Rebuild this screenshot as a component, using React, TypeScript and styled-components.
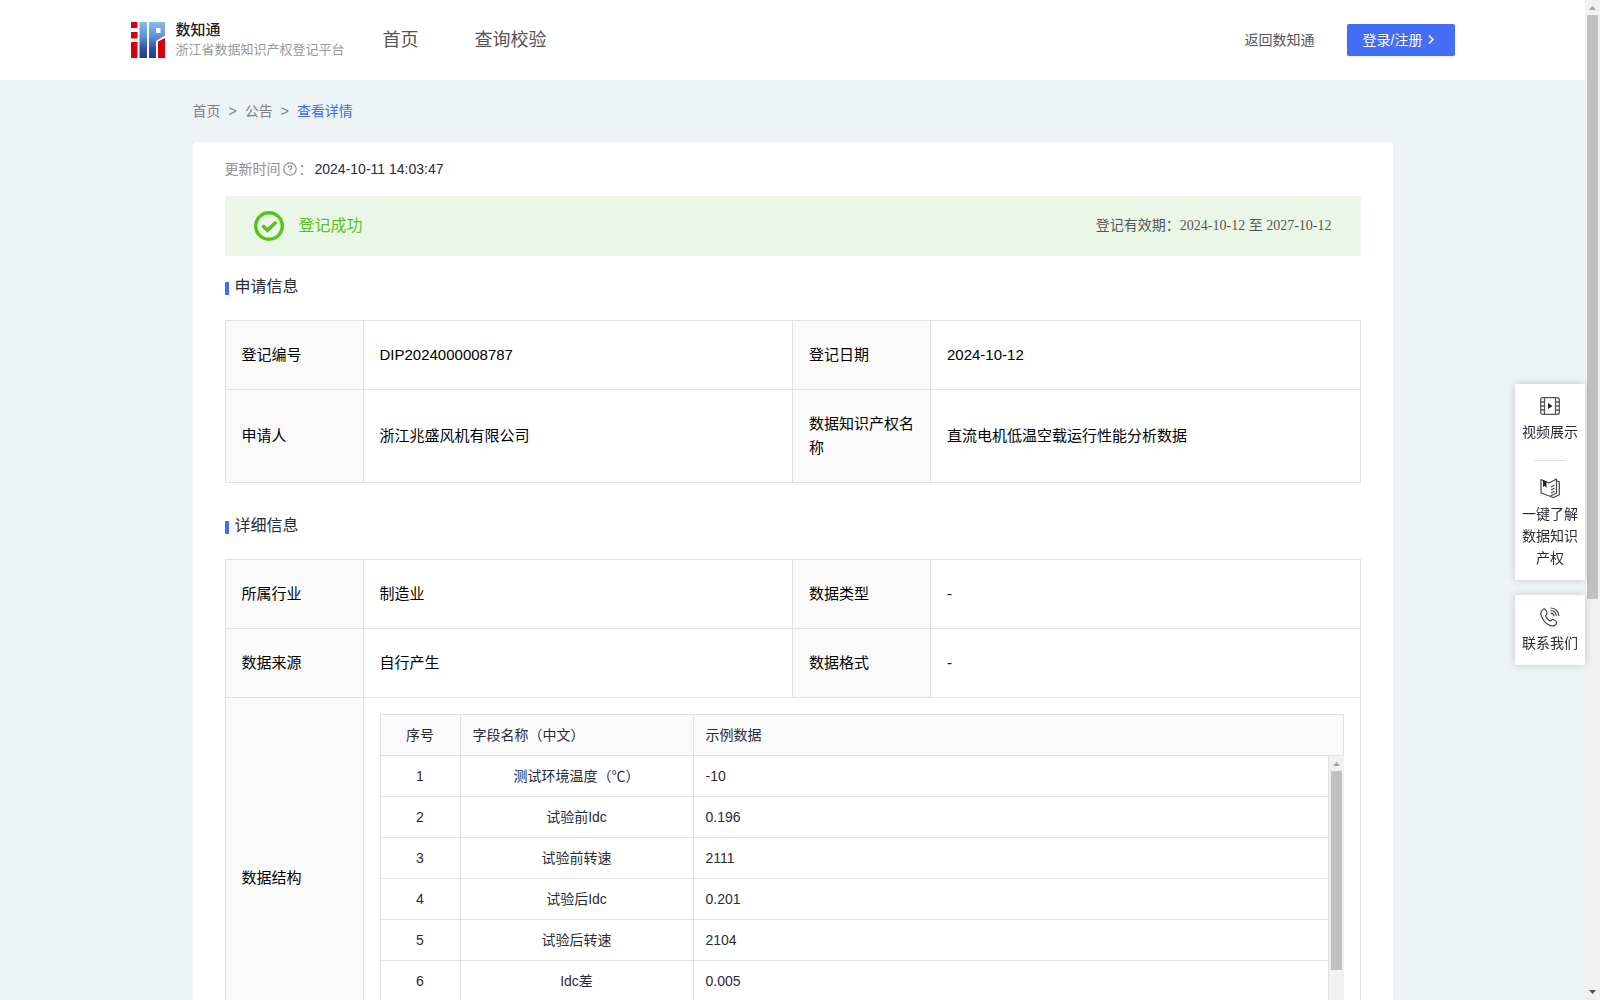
import React from "react";
import styled, { createGlobalStyle } from "styled-components";

const SANS = '"Liberation Sans", "Noto Sans CJK SC", sans-serif';
const SERIF = '"Liberation Serif", "Noto Sans CJK SC", serif';
const LINE = "#e1e1e1";
const BLUE = "#446ef5";
const INK = "#292b38";

const GlobalStyle = createGlobalStyle`
  *, *::before, *::after { box-sizing: border-box; }
  body { margin: 0; font-family: ${SANS}; font-size: 14px; line-height: 22px; color: ${INK}; background: #eef3f6; }
  a { color: inherit; text-decoration: none; }
`;

const Shell = styled.div`
  display: flex;
  height: 100vh;
`;

const Viewport = styled.div`
  flex: 1;
  min-width: 0;
  overflow-y: auto;
  scrollbar-width: none;
`;

/* Scrollbars */
const Track = styled.div`
  flex: none;
  display: flex;
  flex-direction: column;
  width: 15px;
  background: #f1f1f1;
`;

const Arrow = styled.svg`
  flex: none;
  display: block;
  width: 15px;
  height: 15px;
`;

const Groove = styled.div`
  flex: 1;
  min-height: 0;
  padding: 0 2px;
`;

const Thumb = styled.div<{ $share: string }>`
  height: ${(p) => p.$share};
  background: #c1c1c1;
`;

function Scrollbar({ share }: { share: string }) {
  return (
    <Track aria-hidden="true">
      <Arrow viewBox="0 0 15 15">
        <path d="M4 10h7L7.500 6z" fill="#a3a3a3" />
      </Arrow>
      <Groove>
        <Thumb $share={share} />
      </Groove>
      <Arrow viewBox="0 0 15 15">
        <path d="M4 5h7L7.500 9z" fill="#505050" />
      </Arrow>
    </Track>
  );
}

/* Header */
const Header = styled.header`
  background: #fff;
`;

const HeaderInner = styled.div`
  display: flex;
  align-items: center;
  max-width: 1324px;
  height: 80px;
  margin: 0 auto;
`;

const Brand = styled.a`
  display: flex;
  align-items: center;
  gap: 11px;
`;

const BrandText = styled.div`
  display: flex;
  flex-direction: column;
`;

const BrandName = styled.strong`
  font-size: 15px;
  line-height: 20px;
  font-weight: 500;
  color: #222;
`;

const BrandSub = styled.span`
  font-size: 13px;
  line-height: 20px;
  color: #999;
`;

const Nav = styled.nav`
  display: flex;
  gap: 56px;
  margin-left: 38px;
  font-size: 18px;
  line-height: 28px;
  color: #555;
`;

const HeaderActions = styled.div`
  display: flex;
  align-items: center;
  gap: 32px;
  margin-left: auto;
  color: #555;
`;

const LoginButton = styled.button`
  display: flex;
  align-items: center;
  gap: 2px;
  height: 32px;
  padding: 0 16px;
  border: 0;
  border-radius: 2px;
  background: ${BLUE};
  color: #fff;
  font: inherit;
  text-shadow: 0 -1px 0 rgba(0, 0, 0, 0.12);
  box-shadow: 0 2px 0 rgba(0, 0, 0, 0.05);
`;

/* Page body */
const Main = styled.main`
  max-width: 1200px;
  margin: 0 auto;
  padding: 20px 0 40px;
`;

const Crumbs = styled.nav`
  display: flex;
  gap: 8px;
  margin-bottom: 20px;
  color: #808080;
`;

const CrumbCurrent = styled.a`
  color: #3b6cf6;
`;

const Card = styled.section`
  padding: 16px 32px 32px;
  border-radius: 4px;
  background: #fff;
`;

const Updated = styled.div`
  display: flex;
  align-items: center;
  margin-bottom: 16px;
  color: ${INK};
`;

const UpdatedLabel = styled.span`
  display: flex;
  align-items: center;
  gap: 2px;
  width: 90px;
  color: #8f8f94;
`;

const Status = styled.div`
  display: flex;
  align-items: center;
  height: 60px;
  padding: 0 29px;
  background: #ebf7e6;
`;

const StatusText = styled.span`
  margin-left: 15px;
  font-size: 16px;
  line-height: 24px;
  color: #52c41a;
`;

const Validity = styled.span`
  margin-left: auto;
  font-family: ${SERIF};
  color: #555;
`;

const Section = styled.section<{ $gap: number }>`
  margin-top: ${(p) => p.$gap}px;
`;

const SectionTitle = styled.h2`
  display: flex;
  align-items: center;
  gap: 6px;
  margin: 0 0 21px;
  font-size: 16px;
  line-height: 24px;
  font-weight: 400;

  &::before {
    content: "";
    width: 4px;
    height: 13px;
    margin-top: 3px;
    background: ${BLUE};
  }
`;

const InfoTable = styled.table`
  width: 100%;
  table-layout: fixed;
  border-collapse: collapse;
  font-size: 15px;
  line-height: 24px;
  color: #000;
`;

const LabelCol = styled.col`
  width: 138px;
`;

const InfoLabel = styled.th`
  padding: 22px 12px 22px 16px;
  border: 1px solid ${LINE};
  background: #fafafa;
  font-weight: 400;
  text-align: left;
`;

const InfoValue = styled.td`
  padding: 22px 16px;
  border: 1px solid ${LINE};
`;

const NestedCell = styled.td`
  padding: 16px;
  border: 1px solid ${LINE};
`;

/* Field table */
const FieldTable = styled.table`
  width: 100%;
  table-layout: fixed;
  border-collapse: separate;
  border-spacing: 0;
  font-size: 14px;
  line-height: 22px;
  color: ${INK};
`;

const FieldCol = styled.col<{ $width?: number }>`
  width: ${(p) => (p.$width ? `${p.$width}px` : "auto")};
`;

const FieldHead = styled.th<{ $center?: boolean }>`
  height: 41px;
  padding: 9px 12px;
  border-right: 1px solid ${LINE};
  border-bottom: 1px solid ${LINE};
  background: #fafafa;
  font-weight: 400;
  text-align: ${(p) => (p.$center ? "center" : "left")};
`;

const FieldCell = styled.td<{ $center?: boolean }>`
  padding: 9px 12px;
  border-right: 1px solid ${LINE};
  border-bottom: 1px solid ${LINE};
  text-align: ${(p) => (p.$center ? "center" : "left")};
`;

const FieldFrame = styled.div`
  border-top: 1px solid ${LINE};
  border-left: 1px solid ${LINE};
`;

const FieldScroll = styled.div`
  display: flex;
  height: 285px;
`;

const FieldBody = styled.div`
  flex: 1;
  overflow-y: auto;
  scrollbar-width: none;
`;

/* Floating side tools */
const SideTools = styled.aside`
  position: fixed;
  top: 384px;
  right: 15px;
  display: flex;
  flex-direction: column;
  gap: 15px;
  width: 70px;
`;

const SidePanel = styled.div`
  padding: 12px 7px 11px;
  background: #fff;
  box-shadow: 0 0 8px rgba(0, 0, 0, 0.18);
`;

const SideItem = styled.a`
  display: flex;
  flex-direction: column;
  align-items: center;
  gap: 5px;
  text-align: center;
`;

const SideDivider = styled.hr`
  width: 32px;
  height: 1px;
  margin: 17px auto;
  border: 0;
  background: #ddd;
`;

const Logo = () => (
  <svg width="34" height="36" viewBox="0 0 34 36" aria-hidden="true">
    <defs>
      <linearGradient id="logoBlue" x1="0" y1="0" x2="0" y2="36" gradientUnits="userSpaceOnUse">
        <stop offset="0" stopColor="#8abbea" />
        <stop offset="0.4" stopColor="#5f92d6" />
        <stop offset="0.75" stopColor="#2f4fa0" />
        <stop offset="1" stopColor="#253c8c" />
      </linearGradient>
    </defs>
    <path d="M0 0h6.500v6H0zM0 10h6.500v6.500H0zM0 20h6.500v16H0z" fill="#d4000a" />
    <path d="M8.500 0H16v36H8.500z" fill="url(#logoBlue)" />
    <path d="M18 0h16v13.500L25 19v17h-7zM25 6v5h4.500V6z" fill="url(#logoBlue)" fillRule="evenodd" />
    <path d="M27 19.500l7-3.500v20h-7z" fill="#d4000a" />
  </svg>
);

const Chevron = () => (
  <svg width="14" height="14" viewBox="0 0 14 14" aria-hidden="true">
    <path d="M4 2.500l4 4-4 4" fill="none" stroke="#fff" strokeWidth="1.600" />
  </svg>
);

const Question = () => (
  <svg width="14" height="14" viewBox="0 0 14 14" fill="none" stroke="#8f8f94" strokeWidth="1.200" aria-hidden="true">
    <circle cx="7" cy="7" r="6.200" />
    <path d="M5.200 5.700a1.800 1.700 0 1 1 2.700 1.400c-.6.350-.9.600-.9 1.300M7 9.400v1.200" />
  </svg>
);

const Check = () => (
  <svg width="30" height="30" viewBox="0 0 30 30" fill="none" stroke="#52c41a" aria-hidden="true">
    <circle cx="15" cy="15" r="13.300" strokeWidth="3.400" />
    <path d="M8.500 14.500l5 4.700 8.700-8.200" strokeWidth="3.600" />
  </svg>
);

const VideoIcon = () => (
  <svg width="20" height="20" viewBox="0 0 20 20" fill="none" stroke="#55565e" strokeWidth="1.300" aria-hidden="true">
    <rect x="0.700" y="1.700" width="18.600" height="16.600" rx="2" />
    <path d="M4.500 2v16M15.500 2v16M1 6h3.500M1 10h3.500M1 14h3.500M15.500 6H19M15.500 10H19M15.500 14H19" />
    <path d="M8 7v6l4.500-3z" fill="#22242c" stroke="none" />
  </svg>
);

const BookIcon = () => (
  <svg width="20" height="20" viewBox="0 0 20 20" fill="none" stroke="#44464f" strokeWidth="1.200" strokeLinejoin="round" aria-hidden="true">
    <path d="M1 1.500L9 5l7.500-4v14L10 18.300 1 15z" />
    <path d="M17 3l2.300.8v13L13.500 19.500l-3.500-1M11 9l3.500-1.800M11 12l3.500-1.800M11 15l3.500-1.800" />
    <path d="M3 2v7l1.500-1.200L6.500 10V3.500z" fill="#22242c" stroke="none" />
  </svg>
);

const PhoneIcon = () => (
  <svg width="20" height="20" viewBox="0 0 20 20" fill="none" stroke="#44464f" strokeWidth="1.200" strokeLinecap="round" strokeLinejoin="round" aria-hidden="true">
    <path d="M3.200 2.300C.3 4 .2 7.500 2.500 11.500c2.500 4.500 6.500 7.300 10 7.400 2.300 0 4-1.500 4.200-3.500 0-.8-3-3-4-2.900-1 .1-1.500 1.500-2.500 1.400-1.400-.2-4.300-3.600-4.500-5C5.500 8 7 7.500 7.100 6.500 7.200 5.500 5.200 1.800 4.500 1.800c-.5 0-.9.200-1.300.5z" />
    <path d="M11 1c4.300.2 7.500 3.300 7.800 7.500M11 3.500c2.900.2 5 2.200 5.200 5M11 6.200c1.600.1 2.600 1 2.700 2.500" />
  </svg>
);

type Pair = [string, string, string, string];

const applicationRows: Pair[] = [
  ["登记编号", "DIP2024000008787", "登记日期", "2024-10-12"],
  ["申请人", "浙江兆盛风机有限公司", "数据知识产权名称", "直流电机低温空载运行性能分析数据"],
];

const detailRows: Pair[] = [
  ["所属行业", "制造业", "数据类型", "-"],
  ["数据来源", "自行产生", "数据格式", "-"],
];

const fields = [
  ["测试环境温度（℃）", "-10"],
  ["试验前Idc", "0.196"],
  ["试验前转速", "2111"],
  ["试验后Idc", "0.201"],
  ["试验后转速", "2104"],
  ["Idc差", "0.005"],
];

function InfoColumns() {
  return (
    <colgroup>
      <LabelCol />
      <col />
      <LabelCol />
      <col />
    </colgroup>
  );
}

function InfoRow({ cells }: { cells: Pair }) {
  return (
    <tr>
      <InfoLabel scope="row">{cells[0]}</InfoLabel>
      <InfoValue>{cells[1]}</InfoValue>
      <InfoLabel scope="row">{cells[2]}</InfoLabel>
      <InfoValue>{cells[3]}</InfoValue>
    </tr>
  );
}

function FieldColumns() {
  return (
    <colgroup>
      <FieldCol $width={80} />
      <FieldCol $width={233} />
      <FieldCol />
    </colgroup>
  );
}

function Fields() {
  return (
    <FieldFrame>
      <FieldTable>
        <FieldColumns />
        <thead>
          <tr>
            <FieldHead $center>序号</FieldHead>
            <FieldHead>字段名称（中文）</FieldHead>
            <FieldHead>示例数据</FieldHead>
          </tr>
        </thead>
      </FieldTable>
      <FieldScroll>
        <FieldBody>
          <FieldTable>
            <FieldColumns />
            <tbody>
              {fields.map(([name, sample], i) => (
                <tr key={name}>
                  <FieldCell $center>{i + 1}</FieldCell>
                  <FieldCell $center>{name}</FieldCell>
                  <FieldCell>{sample}</FieldCell>
                </tr>
              ))}
            </tbody>
          </FieldTable>
        </FieldBody>
        <Scrollbar share="78%" />
      </FieldScroll>
    </FieldFrame>
  );
}

export default function App() {
  return (
    <>
      <GlobalStyle />
      <Shell>
        <Viewport>
          <Header>
            <HeaderInner>
              <Brand href="#">
                <Logo />
                <BrandText>
                  <BrandName>数知通</BrandName>
                  <BrandSub>浙江省数据知识产权登记平台</BrandSub>
                </BrandText>
              </Brand>
              <Nav>
                <a href="#">首页</a>
                <a href="#">查询校验</a>
              </Nav>
              <HeaderActions>
                <a href="#">返回数知通</a>
                <LoginButton type="button">
                  登录/注册
                  <Chevron />
                </LoginButton>
              </HeaderActions>
            </HeaderInner>
          </Header>
          <Main>
            <Crumbs>
              <a href="#">首页</a>
              <span>&gt;</span>
              <a href="#">公告</a>
              <span>&gt;</span>
              <CrumbCurrent href="#">查看详情</CrumbCurrent>
            </Crumbs>
            <Card>
              <Updated>
                <UpdatedLabel>
                  更新时间
                  <Question />：
                </UpdatedLabel>
                <time>2024-10-11 14:03:47</time>
              </Updated>
              <Status>
                <Check />
                <StatusText>登记成功</StatusText>
                <Validity>登记有效期：2024-10-12 至 2027-10-12</Validity>
              </Status>
              <Section $gap={19}>
                <SectionTitle>申请信息</SectionTitle>
                <InfoTable>
                  <InfoColumns />
                  <tbody>
                    {applicationRows.map((cells) => (
                      <InfoRow key={cells[0]} cells={cells} />
                    ))}
                  </tbody>
                </InfoTable>
              </Section>
              <Section $gap={31}>
                <SectionTitle>详细信息</SectionTitle>
                <InfoTable>
                  <InfoColumns />
                  <tbody>
                    {detailRows.map((cells) => (
                      <InfoRow key={cells[0]} cells={cells} />
                    ))}
                    <tr>
                      <InfoLabel scope="row">数据结构</InfoLabel>
                      <NestedCell colSpan={3}>
                        <Fields />
                      </NestedCell>
                    </tr>
                  </tbody>
                </InfoTable>
              </Section>
            </Card>
          </Main>
        </Viewport>
        <Scrollbar share="60.2%" />
      </Shell>
      <SideTools>
        <SidePanel>
          <SideItem href="#">
            <VideoIcon />
            视频展示
          </SideItem>
          <SideDivider />
          <SideItem href="#">
            <BookIcon />
            一键了解数据知识产权
          </SideItem>
        </SidePanel>
        <SidePanel>
          <SideItem href="#">
            <PhoneIcon />
            联系我们
          </SideItem>
        </SidePanel>
      </SideTools>
    </>
  );
}
